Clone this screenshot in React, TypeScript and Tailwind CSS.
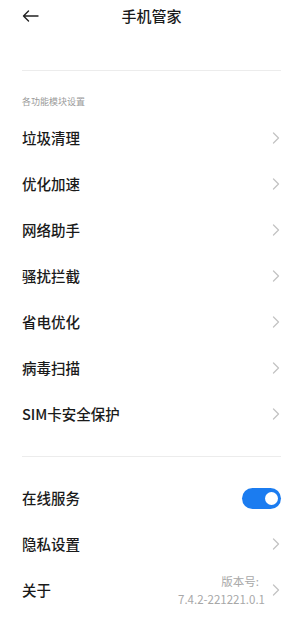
import React from 'react';

const font = { fontFamily: '"Noto Sans CJK SC", "Noto Sans", sans-serif' };

function Chevron() {
  return (
    <svg width="8" height="12" viewBox="0 0 8 12" className="shrink-0">
      <path d="M1.5 1 L6.5 6 L1.5 11" fill="none" stroke="#c4c4c4" strokeWidth="1.3" strokeLinecap="round" strokeLinejoin="round" />
    </svg>
  );
}

function Row({ label, right }: { label: string; right?: React.ReactNode }) {
  return (
    <div className="flex h-[46px] items-center justify-between pl-[22px] pr-[23px]">
      <span className="text-[14.5px] font-medium text-[#1a1a1a]">{label}</span>
      {right ?? <Chevron />}
    </div>
  );
}

const modules = ['垃圾清理', '优化加速', '网络助手', '骚扰拦截', '省电优化', '病毒扫描', 'SIM卡安全保护'];

export default function App() {
  return (
    <div className="h-[626px] w-[303px] overflow-hidden bg-white" style={font}>
      {/* header */}
      <div className="relative flex h-[33px] items-center justify-center">
        <svg width="17" height="12" viewBox="0 0 17 12" className="absolute left-[22px] top-[10px]">
          <path d="M16 6 H1.5 M6.5 1 L1.5 6 L6.5 11" fill="none" stroke="#222" strokeWidth="1.4" strokeLinecap="round" strokeLinejoin="round" />
        </svg>
        <span className="text-[15px] font-medium text-[#1a1a1a]">手机管家</span>
      </div>

      <div className="mx-[22px] mt-[37px] h-px bg-[#ececec]" />

      <div className="pl-[22px] pt-[25px] text-[9px] leading-[12px] text-[#9a9a9a]">各功能模块设置</div>

      <div className="mt-[7px]">
        {modules.map(m => (
          <Row key={m} label={m} />
        ))}
      </div>

      <div className="mx-[22px] mt-[19px] h-px bg-[#ececec]" />

      <div className="mt-[18px]">
        <Row
          label="在线服务"
          right={
            <div className="mr-[-1px] flex h-[21px] w-[39px] items-center justify-end rounded-full bg-[#1b7cf0] pr-[3px]">
              <div className="h-[13px] w-[13px] rounded-full bg-white" />
            </div>
          }
        />
        <Row label="隐私设置" />
        <Row
          label="关于"
          right={
            <div className="flex items-center gap-[7px]">
              <div className="text-right text-[11.5px] leading-[18px] text-[#a8a8a8]">
                <div className="pr-[6px]">版本号:</div>
                <div>7.4.2-221221.0.1</div>
              </div>
              <Chevron />
            </div>
          }
        />
      </div>
    </div>
  );
}
